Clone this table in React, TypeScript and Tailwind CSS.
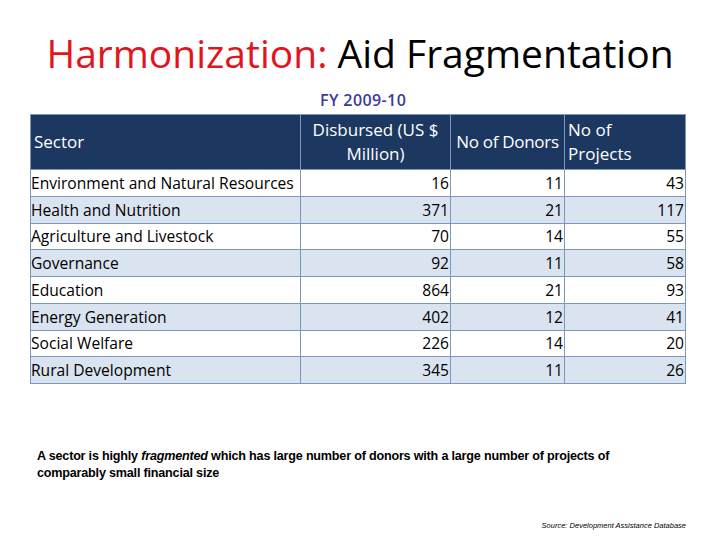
const rows = [
  ["Environment and Natural Resources", "16", "11", "43"],
  ["Health and Nutrition", "371", "21", "117"],
  ["Agriculture and Livestock", "70", "14", "55"],
  ["Governance", "92", "11", "58"],
  ["Education", "864", "21", "93"],
  ["Energy Generation", "402", "12", "41"],
  ["Social Welfare", "226", "14", "20"],
  ["Rural Development", "345", "11", "26"],
];

export default function App() {
  return (
    <div className="w-[720px] h-[540px] bg-white overflow-hidden font-['Open_Sans',sans-serif] text-black">
      <h1 className="pt-[28px] text-center text-[39px] leading-[50px] tracking-[0px]">
        <span className="text-[#e3141c]">Harmonization:</span> Aid Fragmentation
      </h1>

      <div className="pl-[320px] mt-[10px] h-[24px] text-[16px] leading-[24px] font-semibold text-[#3b3ba0] tracking-[0.4px]">
        FY 2009-10
      </div>

      <table className="ml-[30px] mt-[2px] border-collapse table-fixed w-[655px]">
        <colgroup>
          <col className="w-[270px]" />
          <col className="w-[150px]" />
          <col className="w-[114px]" />
          <col className="w-[121px]" />
        </colgroup>
        <thead>
          <tr className="h-[55px] bg-[#1c3860] text-white text-[17px] leading-[24px]">
            <th className="border border-[#7d97bb] text-left font-normal px-[3px]">Sector</th>
            <th className="border border-[#7d97bb] text-center font-normal px-[2px]">
              Disbursed (US $ Million)
            </th>
            <th className="border border-[#7d97bb] text-center font-normal px-0 whitespace-nowrap tracking-[-0.3px]">
              No of Donors
            </th>
            <th className="border border-[#7d97bb] text-left font-normal px-[3px]">
              No of
              <br />
              Projects
            </th>
          </tr>
        </thead>
        <tbody>
          {rows.map((r, i) => (
            <tr
              key={r[0]}
              className={
                "h-[26.75px] text-[15.6px] leading-[20px] " +
                (i % 2 === 0 ? "bg-white" : "bg-[#dae4f1]")
              }
            >
              <td className="border border-[#7d97bb] px-0 whitespace-nowrap">{r[0]}</td>
              <td className="border border-[#7d97bb] text-right px-[1px]">{r[1]}</td>
              <td className="border border-[#7d97bb] text-right px-[1px]">{r[2]}</td>
              <td className="border border-[#7d97bb] text-right px-[1px]">{r[3]}</td>
            </tr>
          ))}
        </tbody>
      </table>

      <p className="ml-[37px] mt-[64px] w-[585px] text-[12.6px] leading-[17px] font-semibold font-['Liberation_Sans',sans-serif] tracking-[-0.2px]">
        A sector is highly <i>fragmented</i> which has large number of donors with a large number of
        projects of comparably small financial size
      </p>

      <p className="mt-[38px] pr-[34px] text-right text-[7.5px] italic text-black font-['Liberation_Sans',sans-serif]">
        Source: Development Assistance Database
      </p>
    </div>
  );
}
